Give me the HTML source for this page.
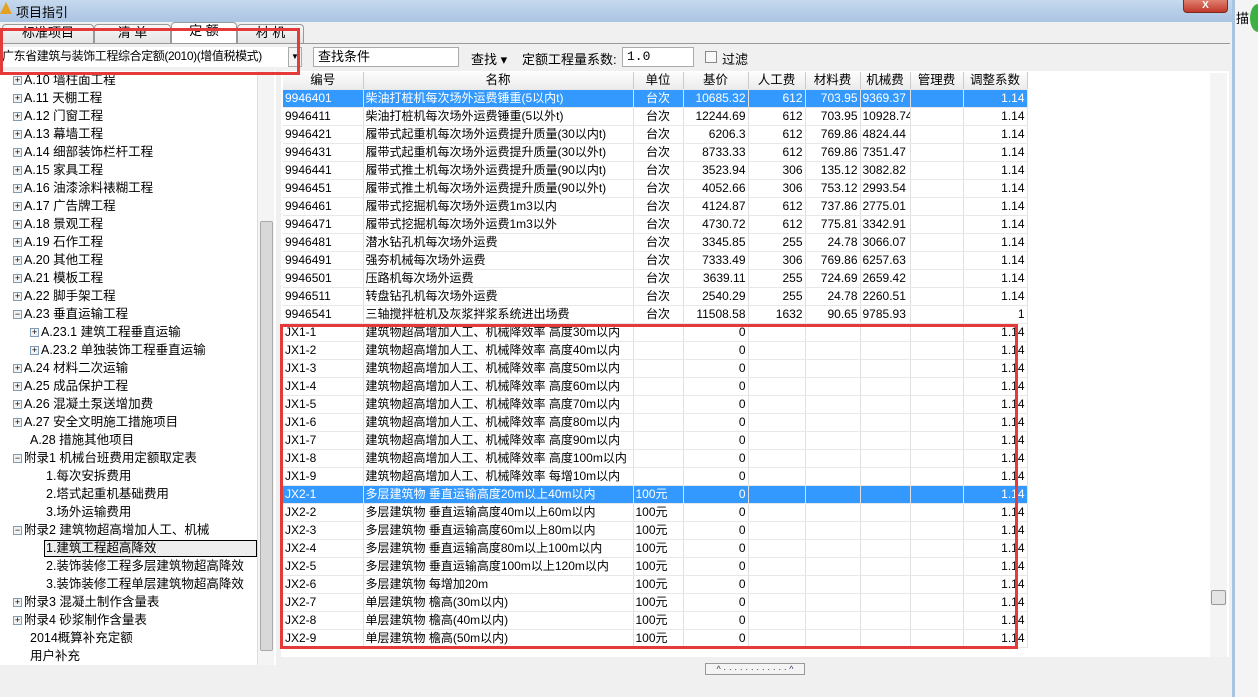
<!DOCTYPE html>
<html><head><meta charset="utf-8">
<style>
*{margin:0;padding:0;box-sizing:border-box}
body{width:1258px;height:697px;overflow:hidden;background:#f0f0f0;font-family:"Liberation Sans","Noto Sans CJK SC",sans-serif;font-size:12px;color:#000;position:relative}
.abs{position:absolute}
#title{left:0;top:0;width:1232px;height:22px;background:linear-gradient(#c6d9ee,#aac4e2);}
#title span{position:absolute;left:16px;top:2px;font-size:13px}
#close{left:1183px;top:0;width:45px;height:13px;background:linear-gradient(#e08070,#c0392b);border:1px solid #7a2a20;border-top:0;border-radius:0 0 4px 4px;color:#fff;text-align:center;font-size:10px;line-height:11px;font-weight:bold}
#outer{left:1232px;top:0;width:26px;height:697px;background:#f4f4f4;border-left:3px solid #a9c3e0}
.tab{top:24px;height:19px;border:1px solid #999;border-bottom:0;border-radius:4px 4px 0 0;background:linear-gradient(#f8f8f8,#e4e4e4);text-align:center;font-size:13px;line-height:16px}
#toolbar{left:0;top:43px;width:1230px;height:28px;border-top:1px solid #999;}
.inp{background:#fff;border:1px solid #aaa;height:20px;top:47px;line-height:18px;padding-left:4px;font-size:13px}
#tree{left:0;top:71px;width:276px;height:594px;background:#fff;overflow:hidden}
.ti{position:absolute;height:18px;line-height:18px;white-space:nowrap;font-size:12.5px}
.pm{display:inline-block;width:9px;height:9px;border:1px solid #7f9db9;background:#f2f2f2;font-size:9px;line-height:7px;text-align:center;vertical-align:middle;margin-right:2px;color:#000}
#tsb{left:257px;top:71px;width:17px;height:586px;background:#f4f4f4;border-left:1px solid #ddd}
#grid{left:281px;top:71px;width:948px;height:586px;background:#fff}
table{border-collapse:collapse;table-layout:fixed;position:absolute;left:283px;top:72px;width:744px}
td,th{height:18px;border-right:1px solid #e0e0e0;border-bottom:1px solid #e8e8e8;padding:0 2px;white-space:nowrap;overflow:hidden;font-size:12px;line-height:17px}
th{font-weight:normal;background:linear-gradient(#fdfdfd,#ececec);border-right:1px solid #ccc;height:17px;text-align:center;font-size:12.5px}
td.r{text-align:right}td.c{text-align:center}
tr.s td{background:#3399ff;color:#fff}
#gsb{left:1210px;top:73px;width:17px;height:584px;background:#f4f4f4}
.red{border:3px solid #e53a3a}
</style></head><body>
<div id="title" class="abs"><span>项目指引</span></div>
<div class="abs" style="left:0;top:2px;width:12px;height:12px;background:#e8a020;clip-path:polygon(50% 0,100% 100%,0 100%)"></div>
<div id="close" class="abs">X</div>
<div id="outer" class="abs"></div>
<div class="abs" style="left:1236px;top:8px;font-size:13px">描</div>
<div class="abs" style="left:1250px;top:4px;width:16px;height:28px;border-radius:50%;background:#3cb043"></div>

<div class="tab abs" style="left:2px;width:92px">标准项目</div>
<div class="tab abs" style="left:94px;width:77px">清 单</div>
<div class="tab abs" style="left:171px;width:66px;background:#fff;top:22px;height:22px">定 额</div>
<div class="tab abs" style="left:237px;width:67px">材 机</div>

<div id="toolbar" class="abs"></div>
<div class="inp abs" style="left:0;width:288px;border:0;background:#fff;font-size:12px;padding-left:2px;letter-spacing:-0.4px;white-space:nowrap;overflow:hidden">广东省建筑与装饰工程综合定额(2010)(增值税模式)</div>
<div class="abs" style="left:288px;top:47px;width:14px;height:20px;border:1px solid #aaa;background:#f4f4f4;font-size:8px;text-align:center;line-height:18px">▼</div>
<div class="inp abs" style="left:313px;width:146px">查找条件</div>
<div class="abs" style="left:471px;top:49px;font-size:13px">查找 ▾</div>
<div class="abs" style="left:522px;top:49px;font-size:13px">定额工程量系数:</div>
<div class="inp abs" style="left:622px;width:72px;font-family:'Liberation Mono',monospace">1.0</div>
<div class="abs" style="left:705px;top:51px;width:12px;height:12px;border:1px solid #888;background:#f8f8f8"></div>
<div class="abs" style="left:722px;top:49px;font-size:13px">过滤</div>

<div id="tree" class="abs">
<div class="ti" style="left:13px;top:0"><span class="pm">+</span>A.10 墙柱面工程</div>
<div class="ti" style="left:13px;top:18px"><span class="pm">+</span>A.11 天棚工程</div>
<div class="ti" style="left:13px;top:36px"><span class="pm">+</span>A.12 门窗工程</div>
<div class="ti" style="left:13px;top:54px"><span class="pm">+</span>A.13 幕墙工程</div>
<div class="ti" style="left:13px;top:72px"><span class="pm">+</span>A.14 细部装饰栏杆工程</div>
<div class="ti" style="left:13px;top:90px"><span class="pm">+</span>A.15 家具工程</div>
<div class="ti" style="left:13px;top:108px"><span class="pm">+</span>A.16 油漆涂料裱糊工程</div>
<div class="ti" style="left:13px;top:126px"><span class="pm">+</span>A.17 广告牌工程</div>
<div class="ti" style="left:13px;top:144px"><span class="pm">+</span>A.18 景观工程</div>
<div class="ti" style="left:13px;top:162px"><span class="pm">+</span>A.19 石作工程</div>
<div class="ti" style="left:13px;top:180px"><span class="pm">+</span>A.20 其他工程</div>
<div class="ti" style="left:13px;top:198px"><span class="pm">+</span>A.21 模板工程</div>
<div class="ti" style="left:13px;top:216px"><span class="pm">+</span>A.22 脚手架工程</div>
<div class="ti" style="left:13px;top:234px"><span class="pm">−</span>A.23 垂直运输工程</div>
<div class="ti" style="left:30px;top:252px"><span class="pm">+</span>A.23.1 建筑工程垂直运输</div>
<div class="ti" style="left:30px;top:270px"><span class="pm">+</span>A.23.2 单独装饰工程垂直运输</div>
<div class="ti" style="left:13px;top:288px"><span class="pm">+</span>A.24 材料二次运输</div>
<div class="ti" style="left:13px;top:306px"><span class="pm">+</span>A.25 成品保护工程</div>
<div class="ti" style="left:13px;top:324px"><span class="pm">+</span>A.26 混凝土泵送增加费</div>
<div class="ti" style="left:13px;top:342px"><span class="pm">+</span>A.27 安全文明施工措施项目</div>
<div class="ti" style="left:30px;top:360px">A.28 措施其他项目</div>
<div class="ti" style="left:13px;top:378px"><span class="pm">−</span>附录1 机械台班费用定额取定表</div>
<div class="ti" style="left:46px;top:396px">1.每次安拆费用</div>
<div class="ti" style="left:46px;top:414px">2.塔式起重机基础费用</div>
<div class="ti" style="left:46px;top:432px">3.场外运输费用</div>
<div class="ti" style="left:13px;top:450px"><span class="pm">−</span>附录2 建筑物超高增加人工、机械</div>
<div class="ti" style="left:44px;top:469px;width:213px;height:17px;line-height:15px;border:1px solid #000;background:#eee;padding-left:1px">1.建筑工程超高降效</div>
<div class="ti" style="left:46px;top:486px">2.装饰装修工程多层建筑物超高降效</div>
<div class="ti" style="left:46px;top:504px">3.装饰装修工程单层建筑物超高降效</div>
<div class="ti" style="left:13px;top:522px"><span class="pm">+</span>附录3 混凝土制作含量表</div>
<div class="ti" style="left:13px;top:540px"><span class="pm">+</span>附录4 砂浆制作含量表</div>
<div class="ti" style="left:30px;top:558px">2014概算补充定额</div>
<div class="ti" style="left:30px;top:576px">用户补充</div>
</div>
<div id="tsb" class="abs" style="height:594px"><div class="abs" style="left:2px;top:150px;width:13px;height:430px;background:#d8d8d8;border:1px solid #aaa;border-radius:2px"></div></div>

<div id="grid" class="abs"></div>
<table>
<colgroup><col style="width:80px"><col style="width:270px"><col style="width:50px"><col style="width:65px"><col style="width:57px"><col style="width:55px"><col style="width:50px"><col style="width:53px"><col style="width:64px"></colgroup>
<tr><th>编号</th><th>名称</th><th>单位</th><th>基价</th><th>人工费</th><th>材料费</th><th>机械费</th><th>管理费</th><th>调整系数</th></tr>
<tr class="s"><td>9946401</td><td>柴油打桩机每次场外运费锤重(5以内t)</td><td class="c">台次</td><td class="r">10685.32</td><td class="r">612</td><td class="r">703.95</td><td>9369.37</td><td></td><td class="r">1.14</td></tr>
<tr><td>9946411</td><td>柴油打桩机每次场外运费锤重(5以外t)</td><td class="c">台次</td><td class="r">12244.69</td><td class="r">612</td><td class="r">703.95</td><td>10928.74</td><td></td><td class="r">1.14</td></tr>
<tr><td>9946421</td><td>履带式起重机每次场外运费提升质量(30以内t)</td><td class="c">台次</td><td class="r">6206.3</td><td class="r">612</td><td class="r">769.86</td><td>4824.44</td><td></td><td class="r">1.14</td></tr>
<tr><td>9946431</td><td>履带式起重机每次场外运费提升质量(30以外t)</td><td class="c">台次</td><td class="r">8733.33</td><td class="r">612</td><td class="r">769.86</td><td>7351.47</td><td></td><td class="r">1.14</td></tr>
<tr><td>9946441</td><td>履带式推土机每次场外运费提升质量(90以内t)</td><td class="c">台次</td><td class="r">3523.94</td><td class="r">306</td><td class="r">135.12</td><td>3082.82</td><td></td><td class="r">1.14</td></tr>
<tr><td>9946451</td><td>履带式推土机每次场外运费提升质量(90以外t)</td><td class="c">台次</td><td class="r">4052.66</td><td class="r">306</td><td class="r">753.12</td><td>2993.54</td><td></td><td class="r">1.14</td></tr>
<tr><td>9946461</td><td>履带式挖掘机每次场外运费1m3以内</td><td class="c">台次</td><td class="r">4124.87</td><td class="r">612</td><td class="r">737.86</td><td>2775.01</td><td></td><td class="r">1.14</td></tr>
<tr><td>9946471</td><td>履带式挖掘机每次场外运费1m3以外</td><td class="c">台次</td><td class="r">4730.72</td><td class="r">612</td><td class="r">775.81</td><td>3342.91</td><td></td><td class="r">1.14</td></tr>
<tr><td>9946481</td><td>潜水钻孔机每次场外运费</td><td class="c">台次</td><td class="r">3345.85</td><td class="r">255</td><td class="r">24.78</td><td>3066.07</td><td></td><td class="r">1.14</td></tr>
<tr><td>9946491</td><td>强夯机械每次场外运费</td><td class="c">台次</td><td class="r">7333.49</td><td class="r">306</td><td class="r">769.86</td><td>6257.63</td><td></td><td class="r">1.14</td></tr>
<tr><td>9946501</td><td>压路机每次场外运费</td><td class="c">台次</td><td class="r">3639.11</td><td class="r">255</td><td class="r">724.69</td><td>2659.42</td><td></td><td class="r">1.14</td></tr>
<tr><td>9946511</td><td>转盘钻孔机每次场外运费</td><td class="c">台次</td><td class="r">2540.29</td><td class="r">255</td><td class="r">24.78</td><td>2260.51</td><td></td><td class="r">1.14</td></tr>
<tr><td>9946541</td><td>三轴搅拌桩机及灰浆拌浆系统进出场费</td><td class="c">台次</td><td class="r">11508.58</td><td class="r">1632</td><td class="r">90.65</td><td>9785.93</td><td></td><td class="r">1</td></tr>
<tr><td>JX1-1</td><td>建筑物超高增加人工、机械降效率 高度30m以内</td><td></td><td class="r">0</td><td></td><td></td><td></td><td></td><td class="r">1.14</td></tr>
<tr><td>JX1-2</td><td>建筑物超高增加人工、机械降效率 高度40m以内</td><td></td><td class="r">0</td><td></td><td></td><td></td><td></td><td class="r">1.14</td></tr>
<tr><td>JX1-3</td><td>建筑物超高增加人工、机械降效率 高度50m以内</td><td></td><td class="r">0</td><td></td><td></td><td></td><td></td><td class="r">1.14</td></tr>
<tr><td>JX1-4</td><td>建筑物超高增加人工、机械降效率 高度60m以内</td><td></td><td class="r">0</td><td></td><td></td><td></td><td></td><td class="r">1.14</td></tr>
<tr><td>JX1-5</td><td>建筑物超高增加人工、机械降效率 高度70m以内</td><td></td><td class="r">0</td><td></td><td></td><td></td><td></td><td class="r">1.14</td></tr>
<tr><td>JX1-6</td><td>建筑物超高增加人工、机械降效率 高度80m以内</td><td></td><td class="r">0</td><td></td><td></td><td></td><td></td><td class="r">1.14</td></tr>
<tr><td>JX1-7</td><td>建筑物超高增加人工、机械降效率 高度90m以内</td><td></td><td class="r">0</td><td></td><td></td><td></td><td></td><td class="r">1.14</td></tr>
<tr><td>JX1-8</td><td>建筑物超高增加人工、机械降效率 高度100m以内</td><td></td><td class="r">0</td><td></td><td></td><td></td><td></td><td class="r">1.14</td></tr>
<tr><td>JX1-9</td><td>建筑物超高增加人工、机械降效率 每增10m以内</td><td></td><td class="r">0</td><td></td><td></td><td></td><td></td><td class="r">1.14</td></tr>
<tr class="s"><td>JX2-1</td><td>多层建筑物 垂直运输高度20m以上40m以内</td><td>100元</td><td class="r">0</td><td></td><td></td><td></td><td></td><td class="r">1.14</td></tr>
<tr><td>JX2-2</td><td>多层建筑物 垂直运输高度40m以上60m以内</td><td>100元</td><td class="r">0</td><td></td><td></td><td></td><td></td><td class="r">1.14</td></tr>
<tr><td>JX2-3</td><td>多层建筑物 垂直运输高度60m以上80m以内</td><td>100元</td><td class="r">0</td><td></td><td></td><td></td><td></td><td class="r">1.14</td></tr>
<tr><td>JX2-4</td><td>多层建筑物 垂直运输高度80m以上100m以内</td><td>100元</td><td class="r">0</td><td></td><td></td><td></td><td></td><td class="r">1.14</td></tr>
<tr><td>JX2-5</td><td>多层建筑物 垂直运输高度100m以上120m以内</td><td>100元</td><td class="r">0</td><td></td><td></td><td></td><td></td><td class="r">1.14</td></tr>
<tr><td>JX2-6</td><td>多层建筑物 每增加20m</td><td>100元</td><td class="r">0</td><td></td><td></td><td></td><td></td><td class="r">1.14</td></tr>
<tr><td>JX2-7</td><td>单层建筑物 檐高(30m以内)</td><td>100元</td><td class="r">0</td><td></td><td></td><td></td><td></td><td class="r">1.14</td></tr>
<tr><td>JX2-8</td><td>单层建筑物 檐高(40m以内)</td><td>100元</td><td class="r">0</td><td></td><td></td><td></td><td></td><td class="r">1.14</td></tr>
<tr><td>JX2-9</td><td>单层建筑物 檐高(50m以内)</td><td>100元</td><td class="r">0</td><td></td><td></td><td></td><td></td><td class="r">1.14</td></tr>
</table>
<div id="gsb" class="abs"><div class="abs" style="left:1px;top:517px;width:15px;height:15px;background:#e4e4e4;border:1px solid #999;border-radius:2px"></div></div>
<div class="abs" style="left:705px;top:663px;width:100px;height:12px;border:1px solid #999;background:#f4f4f4;font-size:9px;line-height:10px;text-align:center;color:#335">^ · · · · · · · · · · · · ^</div>

<div class="red abs" style="left:0;top:28px;width:300px;height:47px"></div>
<div class="red abs" style="left:280px;top:324px;width:738px;height:325px"></div>
</body></html>
